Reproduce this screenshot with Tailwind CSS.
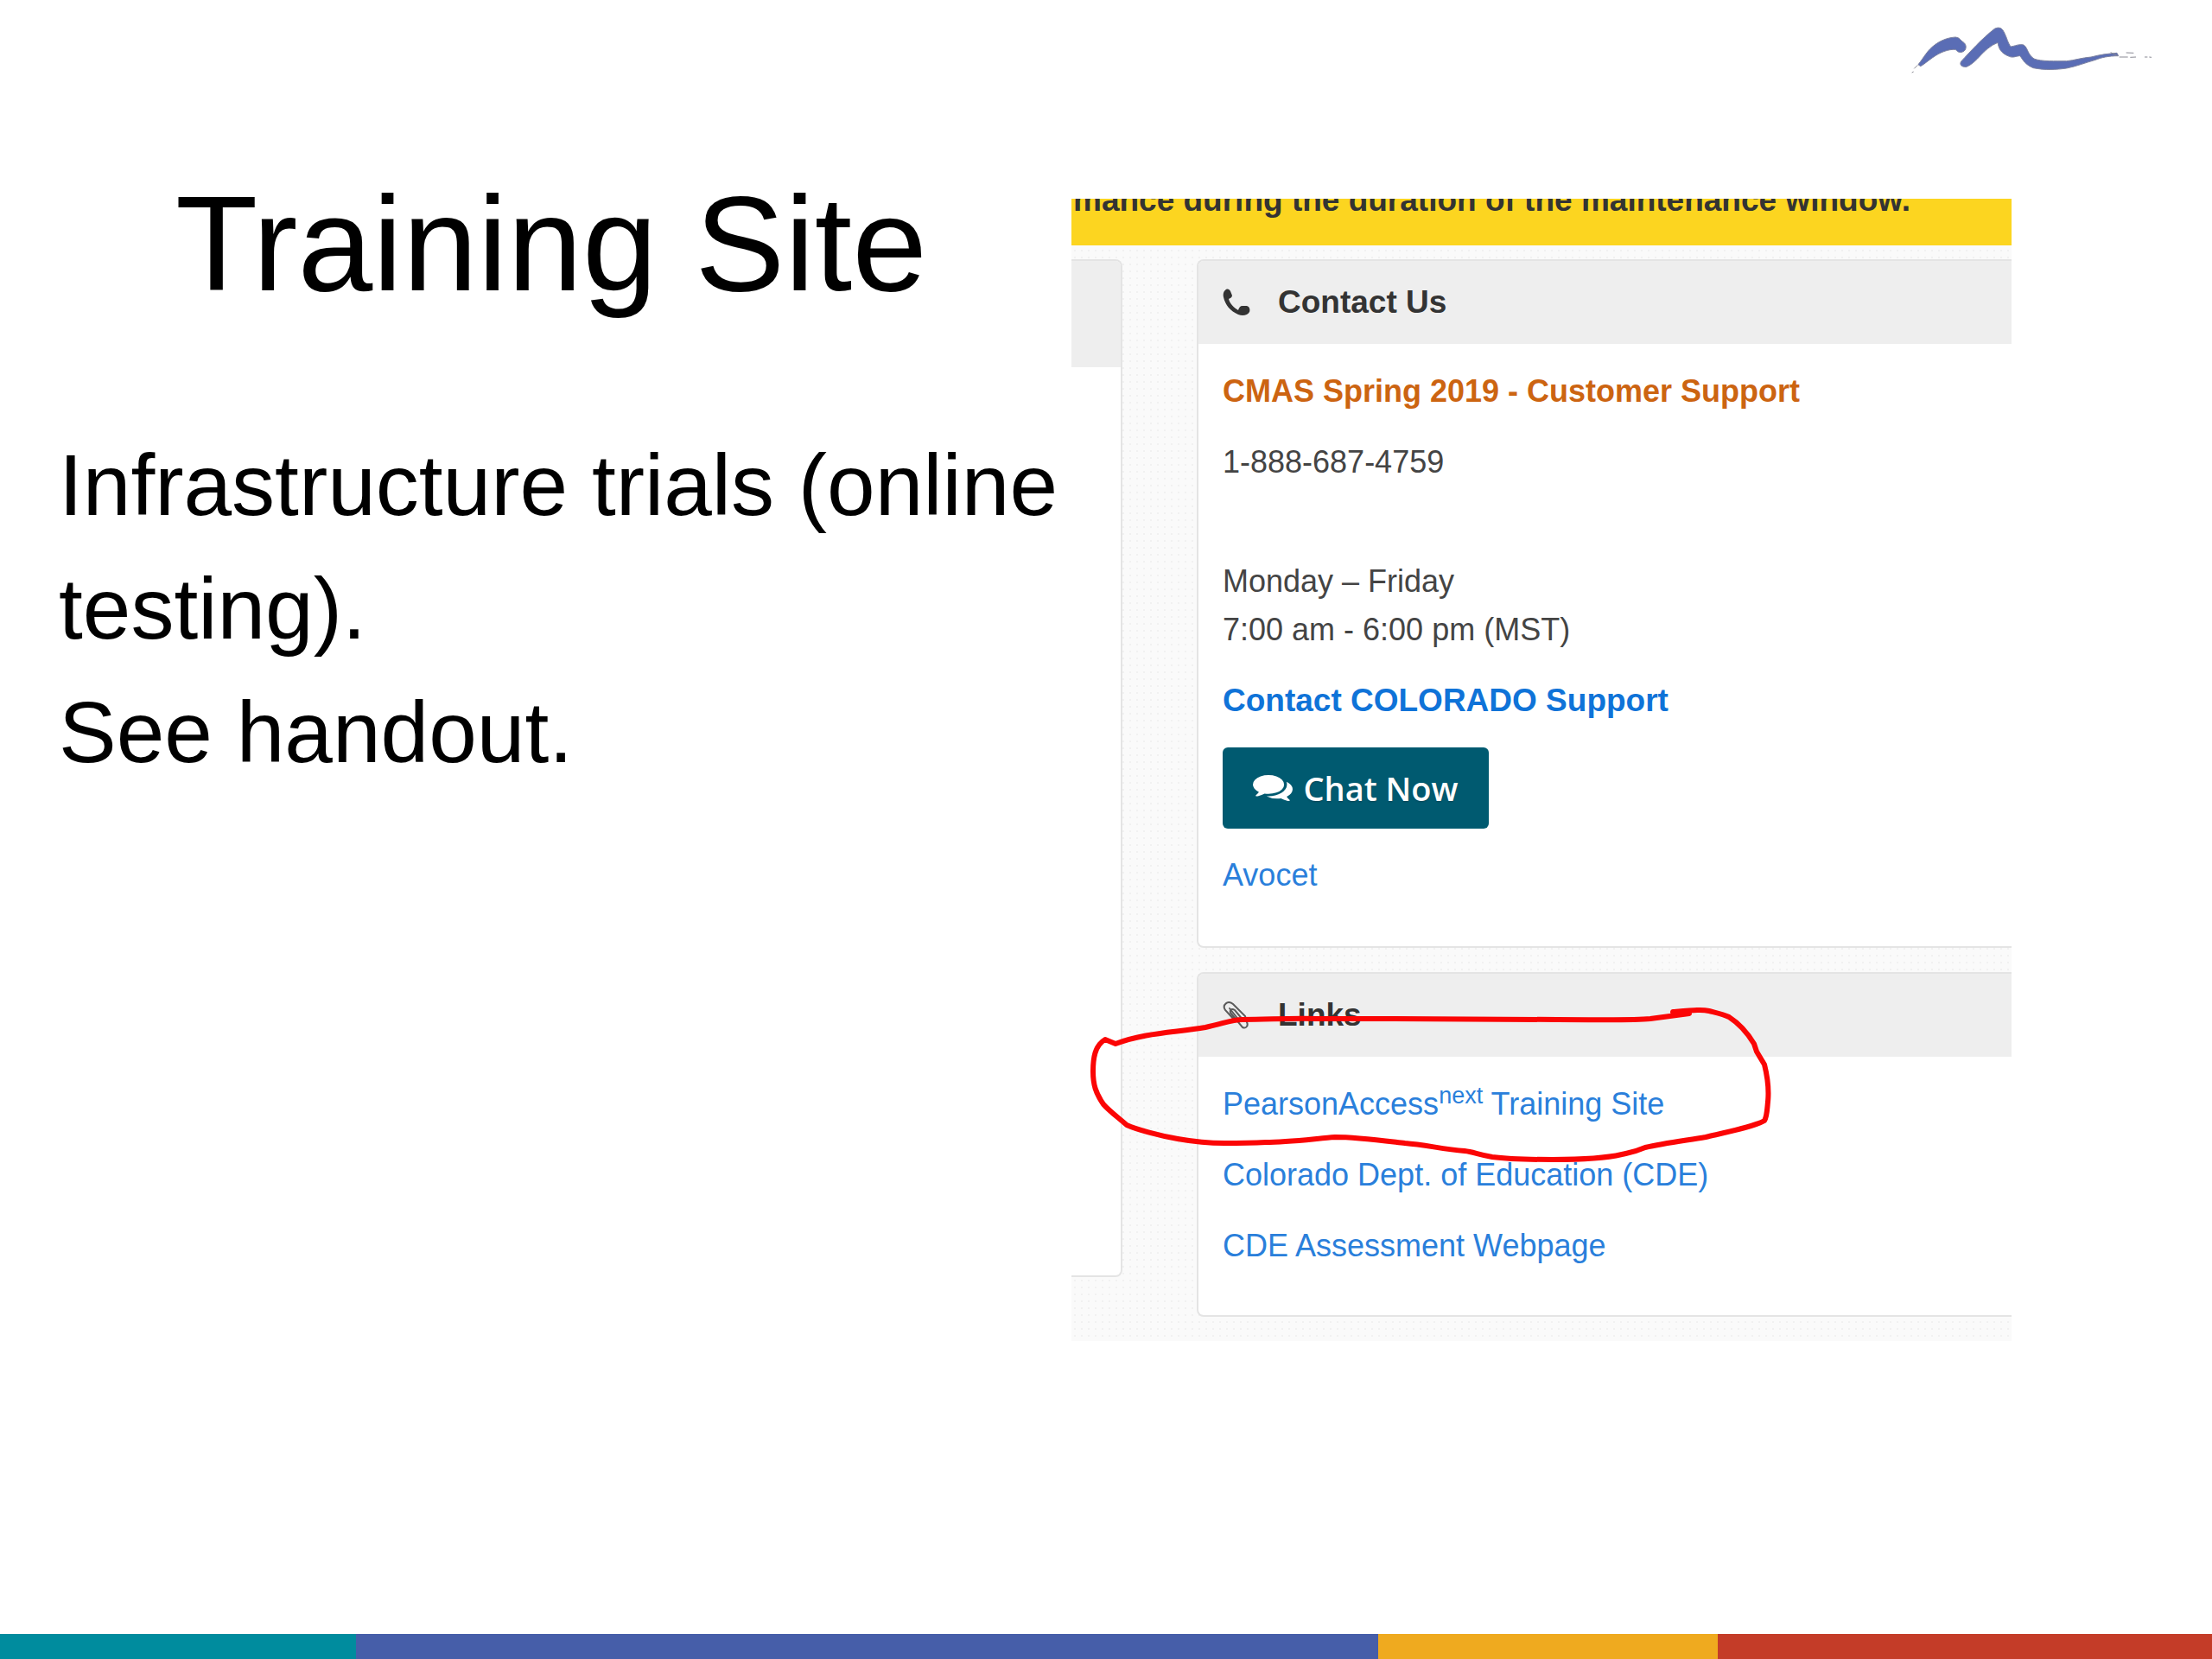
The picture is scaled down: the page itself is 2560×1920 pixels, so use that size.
<!DOCTYPE html>
<html lang="en">

<head>
  <meta charset="UTF-8" />
  <meta name="viewport" content="width=device-width, initial-scale=1.0" />
  <title>Training Site</title>
  <script src="https://cdn.jsdelivr.net/npm/@tailwindcss/browser@4"></script>
</head>

<body class="min-h-screen flex flex-col bg-white text-black font-['Liberation_Sans',Arial,sans-serif]">

  <header class="flex justify-end pt-[10px] pr-10">
    <!-- brush stroke mountain logo -->
    <svg class="w-[340px] h-[90px]" viewBox="0 0 1020 270" role="img" aria-label="Logo">
      <g fill="#5a6db5" stroke="#7d82a0" stroke-width="3" stroke-linejoin="round">
        <path d="M120 194 C140 170 150 145 180 124 C205 106 230 100 250 99 C264 100 268 112 276 116 C290 124 288 146 274 150 C262 154 256 150 250 142 C225 140 195 152 170 170 C155 180 140 194 128 200 Z" />
        <path d="M270 182 C300 150 340 105 385 70 C400 62 412 68 417 80 C428 100 432 122 442 132 C455 130 470 122 486 126 C500 134 500 160 522 174 C545 184 600 182 635 182 C660 180 690 170 720 168 C750 160 780 156 810 154 L815 164 C780 164 755 170 735 178 C700 188 670 200 635 207 C600 212 560 214 520 206 C495 196 485 182 474 164 C460 164 450 172 436 166 C405 154 400 138 396 118 C370 128 350 148 335 164 C320 180 305 195 288 202 C268 204 262 192 270 182 Z" />
      </g>
      <g stroke="#8a8a94" stroke-width="3" fill="none">
        <path d="M106 208 L118 196 M98 222 L104 219 M788 152 L812 164 M818 168 L848 168 M842 153 L868 154 M856 169 L876 168 M906 168 L916 168 M922 168 L930 169" />
      </g>
    </svg>
  </header>

  <main class="grow grid grid-cols-[1240fr_1088fr_232fr] items-start pt-[100px]">

    <section class="pl-[68px]">
      <h1 class="mt-1 pr-8 text-center text-[156px] leading-[156px]">Training Site</h1>
      <div class="mt-[130px] text-[100px] leading-[143px]">
        <p>Infrastructure trials (online testing).</p>
        <p>See handout.</p>
      </div>
    </section>

    <section class="relative mt-[30px] overflow-hidden bg-[#fafafa] bg-[radial-gradient(#f1f1f1_1px,transparent_1px)] bg-[length:8px_8px] text-[36px] leading-[56px] text-[#444]">
      <div class="h-[54px] overflow-hidden bg-[#fcd520] pl-0.5 text-[37px] leading-[56px] font-bold text-[#333] whitespace-nowrap">
        <p class="-mt-[26px]">mance during the duration of the maintenance window.</p>
      </div>

      <div class="flex items-start gap-[86px] pt-4 pb-7">
        <div class="w-[59px] h-[1178px] shrink-0 bg-white border-2 border-l-0 border-[#e4e4e4] rounded-r-lg overflow-hidden">
          <div class="h-[123px] bg-[#eee]"></div>
        </div>

        <div class="grow flex flex-col gap-7">
          <article class="bg-white border-2 border-r-0 border-[#e4e4e4] rounded-l-lg overflow-hidden">
            <h2 class="flex items-center gap-8 px-7 py-5 bg-[#eee] text-[37px] font-bold text-[#333]">
              <svg class="w-8 h-8" viewBox="0 0 32 32" fill="#333" aria-hidden="true">
                <path d="M4 1 C6 0 8 1 9 3 L11 8 C11 10 9 11 7 12 C8 17 13 22 18 25 C19 22 20 20 23 20 L28 20 C31 21 32 24 31 27 C29 31 23 32 18 30 C9 26 3 19 1 10 C0 5 2 2 4 1 Z" />
              </svg>
              Contact Us
            </h2>
            <div class="px-7 pt-[27px] pb-7">
              <p class="mb-[26px] font-bold text-[#cc6411] whitespace-nowrap">CMAS Spring 2019 - Customer Support</p>
              <p class="mb-[26px]">1-888-687-4759<br /><br /></p>
              <p class="mb-[26px]">Monday – Friday<br />7:00 am - 6:00 pm (MST)</p>
              <p class="mb-[26px] text-[37px]"><a href="#" class="font-bold text-[#0f73d8]">Contact COLORADO Support</a></p>
              <button type="button" class="mb-[26px] flex items-center justify-center gap-3 w-[308px] h-[94px] rounded-md bg-[#005a70] text-white text-[38px] font-semibold font-['Open_Sans',sans-serif] text-shadow-sm">
                <svg class="w-[46px] h-[30px]" viewBox="0 256 1792 1408" preserveAspectRatio="none" fill="currentColor" aria-hidden="true">
                  <path d="M1408 768q0 139-94 257t-256.500 186.500-353.500 68.500q-86 0-176-16-124 88-278 128-36 9-86 16h-3q-11 0-20.500-8t-11.500-21q-1-3-1-6.500t.5-6.500 2-6l2.500-5t3.500-5.500 4-5 4.500-5 4-4.500q5-6 23-25t26-29.500 22.500-29 25-38.500 20.500-44q-124-72-195-177t-71-224q0-139 94-257t256.500-186.500 353.500-68.500 353.500 68.500 256.500 186.500 94 257zm384 256q0 120-71 224.500t-195 176.500q10 24 20.500 44t25 38.500 22.500 29 26 29.500 23 25q1 1 4 4.500t4.500 5 4 5 3.500 5.500l2.500 5t2 6 .5 6.500-1 6.500q-3 14-13 22t-22 7q-50-7-86-16-154-40-278-128-90 16-176 16-271 0-472-132 58 4 88 4 161 0 309-45t264-129q125-92 192-212t67-254q0-77-23-152 129 71 204 178t75 230z" />
                </svg>
                Chat Now
              </button>
              <p><a href="#" class="text-[#2a7fdb]">Avocet</a></p>
              <div class="h-[26px]"></div>
            </div>
          </article>

          <article class="bg-white border-2 border-r-0 border-[#e4e4e4] rounded-l-lg overflow-hidden">
            <h2 class="flex items-center gap-8 px-7 py-5 bg-[#eee] text-[37px] font-bold text-[#333]">
              <svg class="w-8 h-8" viewBox="0 0 32 32" fill="none" stroke="#5a5a5a" stroke-width="2" stroke-linecap="round" aria-hidden="true">
                <path d="M15 23 L3 10 C-1 4 6 -2 12 3 L26 17 L28 24 C30 28 27 32 23 30 L9 13 C8 9 11 8 14 10 L24 22 M8 8 L20 23" />
              </svg>
              Links
            </h2>
            <ul class="flex flex-col gap-[26px] px-7 pt-[27px] pb-[52px] whitespace-nowrap">
              <li><a href="#" class="text-[#2a7fdb]">PearsonAccess<sup>next</sup> Training Site</a></li>
              <li><a href="#" class="text-[#2a7fdb]">Colorado Dept. of Education (CDE)</a></li>
              <li><a href="#" class="text-[#2a7fdb]">CDE Assessment Webpage</a></li>
            </ul>
          </article>
        </div>
      </div>

      <!-- hand drawn circle round the training site link -->
      <svg class="absolute left-0 top-[930px] w-[830px] h-[200px] pointer-events-none" viewBox="0 930 830 200" fill="none" stroke="#fb0505" stroke-width="6" stroke-linejoin="round" stroke-linecap="round" aria-hidden="true">
        <path d="M39 973 L51 978 C85 965 120 965 155 959 C175 955 185 950 198 950 C230 950 250 948 284 949 H375 L562 950 C610 950 650 951 670 949 L715 943 L696 941 C720 939 730 938 738 940 C750 943 755 944 761 947 C775 956 784 968 790 978 L793 987 L802 1002 C806 1018 807 1035 806 1045 C805 1055 805 1062 802 1067 C790 1074 760 1080 734 1086 C710 1090 685 1093 664 1098 C650 1104 645 1104 637 1106 C620 1110 590 1112 557 1112 C530 1112 510 1112 487 1109 C470 1106 465 1103 455 1102 C430 1100 410 1095 386 1093 C360 1090 330 1086 305 1086 C280 1088 250 1092 225 1092 C205 1093 195 1093 177 1093 C155 1093 140 1091 123 1088 C100 1084 75 1077 64 1072 C50 1060 43 1055 37 1048 C28 1035 25 1025 25 1010 C25 995 27 980 39 973 Z" />
      </svg>
    </section>
  </main>

  <footer class="grid grid-cols-[412fr_1183fr_393fr_572fr] h-[29px]">
    <div class="bg-[#008c9e]"></div>
    <div class="bg-[#465ea9]"></div>
    <div class="bg-[#efaa1f]"></div>
    <div class="bg-[#c43c28]"></div>
  </footer>
</body>

</html>
